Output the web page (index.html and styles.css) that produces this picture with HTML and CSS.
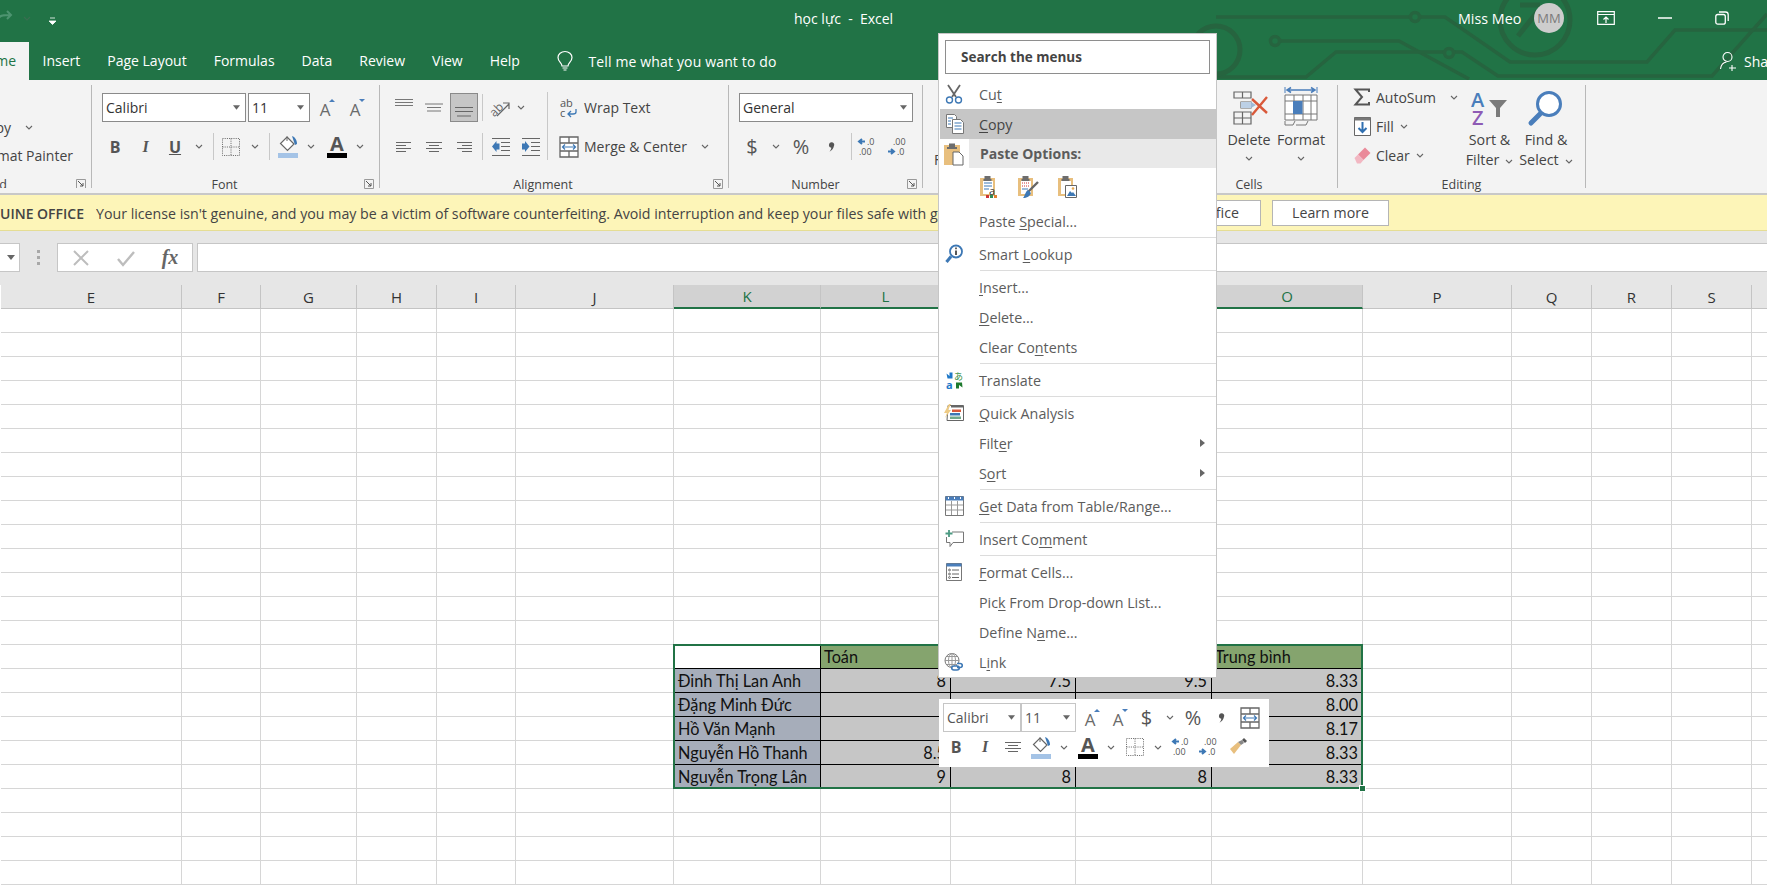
FILE: index.html
```html
<!DOCTYPE html>
<html lang="en">
<head>
<meta charset="utf-8">
<title>học lực - Excel</title>
<link rel="stylesheet" href="styles.css">
</head>
<body>
<svg class="defs" aria-hidden="true">
  <symbol id="chev" viewBox="0 0 8 5"><path d="M1 1l3 3 3-3" fill="none" stroke="#666" stroke-width="1.1"/></symbol>
  <symbol id="caret" viewBox="0 0 8 5"><path d="M0 0h8L4 5z" fill="#666"/></symbol>
  <symbol id="launch" viewBox="0 0 10 10"><path d="M.5.5h9v9h-9z" fill="none" stroke="#999"/><path d="M2 2l5 5M7 4v3H4" fill="none" stroke="#555"/></symbol>
  <symbol id="comma" viewBox="0 0 7 10"><path d="M1 2.800a2.600 2.600 0 1 1 5 1c-.4 2.500-2 4.500-4.500 6 1-1.300 1.700-2.600 1.800-4A2.600 2.600 0 0 1 1 2.800z" fill="#555"/></symbol>
  <symbol id="grow" viewBox="0 0 22 22"><text x="10" y="19" text-anchor="middle" font-family="Open Sans" font-size="17" fill="#6a6a6a">A</text><path d="M14 5l3-3 3 3z" fill="#4a7ebb"/></symbol>
  <symbol id="shrink" viewBox="0 0 22 22"><text x="10" y="19" text-anchor="middle" font-family="Open Sans" font-size="17" fill="#6a6a6a">A</text><path d="M14 2h6l-3 3z" fill="#4a7ebb"/></symbol>
  <symbol id="borders" viewBox="0 0 20 20"><path d="M1.5 1.5h17v17h-17zM10 1.5v17M1.5 10h17" fill="none" stroke="#666" stroke-dasharray="1 1.2"/></symbol>
  <symbol id="fill" viewBox="0 0 20 23"><path d="M9 2l7 7-6.500 6.500-7-7z" fill="#fff" stroke="#666" stroke-width="1.200"/><path d="M9 6V1.500" stroke="#666"/><path d="M14 1c3 1 5 4 5 8l-2 1z" fill="#3d78b5"/><path d="M0 18h20v5H0z" fill="#a4c3e6"/></symbol>
  <symbol id="color" viewBox="0 0 20 23"><text x="10" y="16" text-anchor="middle" font-family="Open Sans" font-weight="700" font-size="20" fill="#555">A</text><path d="M0 18h20v5H0z" fill="#000"/></symbol>
  <symbol id="l-top" viewBox="0 0 20 20"><path d="M1 1.500h18M1 4.500h18M1 7.500h18" stroke="#777" stroke-width="1"/></symbol>
  <symbol id="l-mid" viewBox="0 0 20 20"><path d="M1 6h18M3 9.500h14M3 13h14" stroke="#777" stroke-width="1"/></symbol>
  <symbol id="l-bot" viewBox="0 0 20 20"><path d="M1 9.500h18M1 13.500h18M3 18h14" stroke="#666" stroke-width="1"/></symbol>
  <symbol id="a-left" viewBox="0 0 20 12"><path d="M2 1.500h15M2 4.500h10M2 7.500h15M2 10.500h10" stroke="#666" stroke-width="1.100"/></symbol>
  <symbol id="a-center" viewBox="0 0 20 12"><path d="M2 1.500h16M5 4.500h10M2 7.500h16M5 10.500h10" stroke="#666" stroke-width="1.100"/></symbol>
  <symbol id="a-right" viewBox="0 0 20 12"><path d="M3 1.500h15M8 4.500h10M3 7.500h15M8 10.500h10" stroke="#666" stroke-width="1.100"/></symbol>
  <symbol id="orient" viewBox="0 0 22 22"><text x="0" y="16" transform="rotate(-45 8 12)" font-family="Open Sans" font-size="12" fill="#666">ab</text><path d="M8 19l12-12M14 6h6v6" fill="none" stroke="#666" stroke-width="1.200"/></symbol>
  <symbol id="outdent" viewBox="0 0 20 20"><path d="M1 1.500h18M10 5.500h9M10 9.500h9M10 13.500h9M1 18.500h18" stroke="#666" stroke-width="1.200"/><path d="M8.500 6.500v6h-3v2.500L1 9.500 5.500 4v2.500z" fill="#3d78b5"/></symbol>
  <symbol id="indent" viewBox="0 0 20 20"><path d="M1 1.500h18M10 5.500h9M10 9.500h9M10 13.500h9M1 18.500h18" stroke="#666" stroke-width="1.200"/><path d="M1 6.500v6h3v2.500l4.500-5.500L4 4v2.500z" fill="#3d78b5"/></symbol>
  <symbol id="wrap" viewBox="0 0 20 20"><text x="1" y="9" font-family="Open Sans" font-size="11" fill="#555">ab</text><text x="1" y="19" font-family="Open Sans" font-size="11" fill="#555">c</text><path d="M17 11v3c0 2-2 2-3 2H9M12 13l-3 3 3 3" fill="none" stroke="#3d78b5" stroke-width="1.300"/></symbol>
  <symbol id="merge" viewBox="0 0 20 22"><path d="M1 1h18v20H1zM1 7h18M1 15h18M10 1v6M10 15v6" fill="#fff" stroke="#666" stroke-width="1.300"/><path d="M3.500 11h13M6 8.500L3.500 11 6 13.500M14 8.500l2.500 2.500-2.500 2.500" fill="none" stroke="#3d78b5" stroke-width="1.200"/></symbol>
  <symbol id="incd" viewBox="0 0 26 20"><path d="M9 4.500H4M6 2L3 4.500 6 7" fill="none" stroke="#3d78b5" stroke-width="2"/><text x="11" y="8" font-family="Open Sans" font-size="9" fill="#555">.0</text><text x="3" y="18" font-family="Open Sans" font-size="9" fill="#555">.00</text></symbol>
  <symbol id="decd" viewBox="0 0 26 20"><text x="7" y="8" font-family="Open Sans" font-size="9" fill="#555">.00</text><path d="M2 14.500h5M5 12l3 2.500L5 17" fill="none" stroke="#3d78b5" stroke-width="2"/><text x="11" y="18" font-family="Open Sans" font-size="9" fill="#555">.0</text></symbol>
  <symbol id="clip" viewBox="0 0 22 24"><path d="M1 3h16v20H1z" fill="#e8bf7e"/><path d="M6 1.500h6V5h2v2H4V5h2z" fill="#6d6d6d"/></symbol>
  <symbol id="chk" viewBox="0 0 20 22"><path d="M1 3h15v18H1z" fill="#e8bf7e"/><path d="M4 6h10v13H4z" fill="#fff"/><path d="M5.500 1h6v3h1v2h-8V4h1z" fill="#6d6d6d"/></symbol>
  <symbol id="azsort" viewBox="0 0 38 34"><text x="0" y="16" font-family="Open Sans" font-weight="600" font-size="20" fill="#4a7ebb">A</text><text x="1" y="34" font-family="Open Sans" font-weight="600" font-size="20" fill="#8e5bb5">Z</text><path d="M18 9h18l-7 8v9h-4v-9z" fill="#7a7a7a"/></symbol>
  <symbol id="translate" viewBox="0 0 17 17"><path d="M.5 1.500L3.500 4V.5h3v6h-5z" fill="#1e78c8"/><text x="8" y="8" font-family="Noto Sans CJK JP" font-size="9" fill="#2e8b3a">あ</text><text x="0" y="17" font-family="Open Sans" font-weight="700" font-size="11" fill="#1e78c8">a</text><path d="M16.500 15.500L13 13v3.500h-3v-6h6z" fill="#1e7a2e"/></symbol>
</svg>

<div class="app">
  <div class="chrome">
    <svg class="circuit" width="551" height="80" viewBox="1216 0 551 80" aria-hidden="true">
      <g fill="none" stroke="#26643f" stroke-width="3.500">
        <path d="M1216 17h194M1420 17h25l65 45h137l28-32h92"/>
        <path d="M1280 41h119l70 38"/>
        <path d="M1216 77h90l30-25h108M1454 52h8l36 24h214l55-62"/>
        <circle cx="1415" cy="17" r="4.500"/><circle cx="1275" cy="41" r="4.500"/><circle cx="1449" cy="53" r="4.500"/>
        <circle cx="1535" cy="20" r="35" stroke-width="5"/><circle cx="1216" cy="50" r="24" stroke-width="5"/>
        <path d="M1520 5h20M1518 36l20-25" stroke-width="5"/>
      </g>
    </svg>
    <header class="titlebar">
      <div class="qat">
        <svg class="redo" width="14" height="14" viewBox="0 0 14 14"><path d="M0 8c1-3 5-3 11-3M8 1l4 4-4 4" fill="none" stroke="#4d9470" stroke-width="2"/></svg>
        <svg class="qat-chev" width="8" height="5"><use href="#chev"/></svg>
        <svg class="qat-more" width="7" height="8" viewBox="0 0 7 8"><path d="M1 1h5M0 4h7L3.500 7.500z" fill="#fff" stroke="#fff" stroke-width=".8"/></svg>
      </div>
      <div class="doc-title">học lực&nbsp; -&nbsp; Excel</div>
      <div class="user">Miss Meo</div>
      <div class="avatar">MM</div>
      <svg class="win-ribbon" width="18" height="14" viewBox="0 0 18 14"><path d="M.7.7h16.600v12.600H.7zM.7 3.500h16.600" fill="none" stroke="#fff" stroke-width="1.200"/><path d="M9 12V6M6.500 8.500L9 6l2.500 2.500" fill="none" stroke="#fff" stroke-width="1.200"/></svg>
      <svg class="win-min" width="14" height="2"><path d="M0 1h14" stroke="#fff" stroke-width="1.500"/></svg>
      <svg class="win-restore" width="14" height="14" viewBox="0 0 14 14"><rect x=".8" y="3.500" width="9.500" height="9.700" rx="2" fill="none" stroke="#fff" stroke-width="1.300"/><path d="M4 1h6.500c1.500 0 2.700 1.200 2.700 2.700V10" fill="none" stroke="#fff" stroke-width="1.300"/></svg>
    </header>

    <nav class="tabs">
      <div class="tab tab-home">Home</div>
      <div class="tab">Insert</div>
      <div class="tab">Page Layout</div>
      <div class="tab">Formulas</div>
      <div class="tab">Data</div>
      <div class="tab">Review</div>
      <div class="tab">View</div>
      <div class="tab">Help</div>
      <div class="tell">
        <svg width="16" height="20" viewBox="0 0 16 20"><path d="M5 15c0-3-4-4.500-4-8.500a7 6 0 0 1 14 0c0 4-4 5.500-4 8.500zM5.500 17h5M6.500 19h3" fill="none" stroke="#fff" stroke-width="1.200"/></svg>
        <span>Tell me what you want to do</span>
      </div>
      <div class="share">
        <svg width="18" height="20" viewBox="0 0 18 20"><circle cx="7.500" cy="6" r="4.500" fill="none" stroke="#fff" stroke-width="1.100"/><path d="M.5 18c.5-4 3-6.500 6-7M12 14v6M9 17h7" fill="none" stroke="#fff" stroke-width="1.100"/></svg>
        <span>Share</span>
      </div>
    </nav>
  </div>

  <section class="ribbon">
    <div class="group g-clip">
      <div class="clip-row clip-copy"><span>Copy</span><svg class="clip-chev" width="8" height="5"><use href="#chev"/></svg></div>
      <div class="clip-row clip-paint"><span>Format Painter</span></div>
      <div class="group-label clip-label">Clipboard<svg class="launch" width="10" height="10"><use href="#launch"/></svg></div>
    </div>

    <div class="group g-font">
      <div class="rows">
        <div class="row font-r1">
          <div class="combo w144"><span>Calibri</span><svg width="7" height="5"><use href="#caret"/></svg></div>
          <div class="combo size-combo w62"><span>11</span><svg width="7" height="5"><use href="#caret"/></svg></div>
          <span class="s w31"><svg width="22" height="22"><use href="#grow"/></svg></span>
          <span class="s w30"><svg width="22" height="22"><use href="#shrink"/></svg></span>
        </div>
        <div class="row font-r2">
          <span class="s w30 btn-b">B</span>
          <span class="s w31 btn-i">I</span>
          <span class="s w28 btn-u">U</span>
          <span class="s w20"><svg width="8" height="5"><use href="#chev"/></svg></span>
          <span class="s w9"><i class="vs"></i></span>
          <span class="s w26"><svg width="20" height="20"><use href="#borders"/></svg></span>
          <span class="s w22"><svg width="8" height="5"><use href="#chev"/></svg></span>
          <span class="s w6"><i class="vs"></i></span>
          <span class="s w32"><svg width="20" height="23"><use href="#fill"/></svg></span>
          <span class="s w14"><svg width="8" height="5"><use href="#chev"/></svg></span>
          <span class="s w38"><svg width="20" height="23"><use href="#color"/></svg></span>
          <span class="s w8"><svg width="8" height="5"><use href="#chev"/></svg></span>
        </div>
      </div>
      <div class="group-label">Font<svg class="launch" width="10" height="10"><use href="#launch"/></svg></div>
    </div>

    <div class="group g-align">
      <div class="align-body">
        <div class="rows align-left">
          <div class="row align-r">
            <span class="s w30"><svg width="20" height="20"><use href="#l-top"/></svg></span>
            <span class="s w30"><svg width="20" height="20"><use href="#l-mid"/></svg></span>
            <span class="s w30"><span class="active-btn"><svg width="20" height="20"><use href="#l-bot"/></svg></span></span>
            <span class="s w7"><i class="vs"></i></span>
            <span class="s w28"><svg width="22" height="22"><use href="#orient"/></svg></span>
            <span class="s w14"><svg width="8" height="5"><use href="#chev"/></svg></span>
          </div>
          <div class="row align-r row2">
            <span class="s w30"><svg width="20" height="12"><use href="#a-left"/></svg></span>
            <span class="s w30"><svg width="20" height="12"><use href="#a-center"/></svg></span>
            <span class="s w30"><svg width="20" height="12"><use href="#a-right"/></svg></span>
            <span class="s w7"><i class="vs"></i></span>
            <span class="s w30"><svg width="20" height="20"><use href="#outdent"/></svg></span>
            <span class="s w30"><svg width="20" height="20"><use href="#indent"/></svg></span>
          </div>
        </div>
        <i class="vs-tall"></i>
        <div class="rows align-right">
          <div class="row"><span class="s w31"><svg width="20" height="20"><use href="#wrap"/></svg></span><span>Wrap Text</span></div>
          <div class="row row2"><span class="s w31"><svg width="20" height="22"><use href="#merge"/></svg></span><span>Merge &amp; Center</span><svg class="merge-chev" width="8" height="5"><use href="#chev"/></svg></div>
        </div>
      </div>
      <div class="group-label">Alignment<svg class="launch" width="10" height="10"><use href="#launch"/></svg></div>
    </div>

    <div class="group g-number">
      <div class="rows">
        <div class="row num-r1"><div class="combo w174"><span>General</span><svg width="7" height="5"><use href="#caret"/></svg></div></div>
        <div class="row num-r2">
          <span class="s w24 glyph-l">$</span>
          <span class="s w24"><svg width="8" height="5"><use href="#chev"/></svg></span>
          <span class="s w26 glyph-l">%</span>
          <span class="s w35"><svg width="7" height="10"><use href="#comma"/></svg></span>
          <span class="s w4"><i class="vs"></i></span>
          <span class="s w32"><svg width="26" height="20"><use href="#incd"/></svg></span>
          <span class="s w28"><svg width="26" height="20"><use href="#decd"/></svg></span>
        </div>
      </div>
      <div class="group-label">Number<svg class="launch" width="10" height="10"><use href="#launch"/></svg></div>
    </div>

    <div class="group g-styles"><div class="styles-stub">Format as</div></div>

    <div class="group g-cells">
      <div class="bigs">
        <div class="big w52">
          <div class="big-icon del-icon"><svg width="36" height="34" viewBox="0 0 36 34"><path d="M1 1h17v6H1zM9.500 1v6M8 11h10v6H8zM1 21h17v12H1zM1 27h17M9.500 21v12" fill="none" stroke="#666" stroke-width="1.200"/><path d="M8 11h10v6H8z" fill="#bcd0e6"/><path d="M18 11l5 3-5 3z" fill="#9db9d8"/><path d="M19 8l15 14M34 6L19 24" stroke="#d9593a" stroke-width="2.400" fill="none"/></svg></div>
          <span>Delete</span>
          <svg class="big-chev" width="8" height="5"><use href="#chev"/></svg>
        </div>
        <div class="big w52">
          <div class="big-icon"><svg width="34" height="42" viewBox="0 0 34 42"><path d="M1 0v6M33 0v6" stroke="#4a7ebb"/><path d="M3 3h28M7 .5L3 3l4 2.500M27 .5L31 3l-4 2.500" fill="none" stroke="#4a7ebb" stroke-width="1.500"/><path d="M1 8h32v25H1zM1 14h32M1 27h32M10 8v25M19 8v25M27 8v25" fill="#fff" stroke="#777" stroke-width="1"/><path d="M9 14h9.500v13H9z" fill="#4a7ebb"/><path d="M1 34v4h8l2-4M12 38h10l2-4" fill="none" stroke="#777"/></svg></div>
          <span>Format</span>
          <svg class="big-chev" width="8" height="5"><use href="#chev"/></svg>
        </div>
      </div>
      <div class="group-label">Cells</div>
    </div>

    <div class="group g-edit">
      <div class="edit-body">
        <div class="edit-col">
          <div class="edit-row"><span class="s w24"><svg width="16" height="18" viewBox="0 0 16 18"><path d="M15 4V1.500H1.500L8 9l-6.500 7.500H15V14" fill="none" stroke="#555" stroke-width="2"/></svg></span><span>AutoSum</span><svg class="autosum-chev" width="8" height="5"><use href="#chev"/></svg></div>
          <div class="edit-row"><span class="s w24"><svg width="17" height="19" viewBox="0 0 17 19"><path d="M.5.500h16v18H.5z" fill="#fff" stroke="#666"/><path d="M.5.500h16v3H.5z" fill="#777"/><path d="M8.500 5v10M4.500 11l4 4 4-4" fill="none" stroke="#2f6fb0" stroke-width="2"/></svg></span><span>Fill</span><svg class="fill-chev" width="8" height="5"><use href="#chev"/></svg></div>
          <div class="edit-row"><span class="s w24"><svg width="17" height="17" viewBox="0 0 17 17"><path d="M11 .5l5.500 5.500-7 7L4 7.500z" fill="#ea8a9a"/><path d="M4 7.500l5.500 5.500-3 3.500H3L.5 11z" fill="#f2b7c2"/></svg></span><span>Clear</span><svg class="fill-chev" width="8" height="5"><use href="#chev"/></svg></div>
        </div>
        <div class="big w57">
          <div class="big-icon"><svg width="38" height="34" viewBox="0 0 38 34"><use href="#azsort"/></svg></div>
          <span>Sort &amp;</span>
          <span>Filter<svg class="inl-chev" width="8" height="5"><use href="#chev"/></svg></span>
        </div>
        <div class="big w56">
          <div class="big-icon"><svg width="36" height="36" viewBox="0 0 36 36"><circle cx="21" cy="14" r="11.500" fill="#fff" stroke="#4a7ebb" stroke-width="3"/><path d="M12 24L3 33" stroke="#4a7ebb" stroke-width="5" stroke-linecap="round"/></svg></div>
          <span>Find &amp;</span>
          <span>Select<svg class="inl-chev" width="8" height="5"><use href="#chev"/></svg></span>
        </div>
      </div>
      <div class="group-label">Editing</div>
    </div>
  </section>

  <section class="notice">
    <div class="notice-title"><b>GENUINE OFFICE</b></div>
    <div class="notice-text">Your license isn't genuine, and you may be a victim of software counterfeiting. Avoid interruption and keep your files safe with genuine Office.</div>
    <div class="notice-btn nb-get">Get genuine Office</div>
    <div class="notice-btn nb-learn">Learn more</div>
  </section>

  <section class="formula">
    <div class="namebox"><svg width="8" height="5"><use href="#caret"/></svg></div>
    <div class="dots"><i></i><i></i><i></i></div>
    <div class="fx-box">
      <span class="s w46"><svg width="16" height="16" viewBox="0 0 16 16"><path d="M1 1l14 14M15 1L1 15" stroke="#bdbdbd" stroke-width="2"/></svg></span>
      <span class="s w44"><svg width="18" height="16" viewBox="0 0 18 16"><path d="M1 9l5 6L17 2" fill="none" stroke="#bdbdbd" stroke-width="2.400"/></svg></span>
      <span class="s w44 fx">fx</span>
    </div>
    <div class="fx-input"></div>
  </section>

  <section class="sheet">
    <table class="grid">
      <colgroup>
        <col class="c-e"><col class="c-f"><col class="c-g"><col class="c-h"><col class="c-i"><col class="c-j"><col class="c-k"><col class="c-l"><col class="c-m"><col class="c-n"><col class="c-o"><col class="c-p"><col class="c-q"><col class="c-r"><col class="c-s"><col class="c-t">
      </colgroup>
      <thead>
        <tr><th>E</th><th>F</th><th>G</th><th>H</th><th>I</th><th>J</th><th class="sel">K</th><th class="sel">L</th><th class="sel">M</th><th class="sel">N</th><th class="sel">O</th><th>P</th><th>Q</th><th>R</th><th>S</th><th>T</th></tr>
      </thead>
      <tbody>
        <tr><td></td><td></td><td></td><td></td><td></td><td></td><td></td><td></td><td></td><td></td><td></td><td></td><td></td><td></td><td></td><td></td></tr>
        <tr><td></td><td></td><td></td><td></td><td></td><td></td><td></td><td></td><td></td><td></td><td></td><td></td><td></td><td></td><td></td><td></td></tr>
        <tr><td></td><td></td><td></td><td></td><td></td><td></td><td></td><td></td><td></td><td></td><td></td><td></td><td></td><td></td><td></td><td></td></tr>
        <tr><td></td><td></td><td></td><td></td><td></td><td></td><td></td><td></td><td></td><td></td><td></td><td></td><td></td><td></td><td></td><td></td></tr>
        <tr><td></td><td></td><td></td><td></td><td></td><td></td><td></td><td></td><td></td><td></td><td></td><td></td><td></td><td></td><td></td><td></td></tr>
        <tr><td></td><td></td><td></td><td></td><td></td><td></td><td></td><td></td><td></td><td></td><td></td><td></td><td></td><td></td><td></td><td></td></tr>
        <tr><td></td><td></td><td></td><td></td><td></td><td></td><td></td><td></td><td></td><td></td><td></td><td></td><td></td><td></td><td></td><td></td></tr>
        <tr><td></td><td></td><td></td><td></td><td></td><td></td><td></td><td></td><td></td><td></td><td></td><td></td><td></td><td></td><td></td><td></td></tr>
        <tr><td></td><td></td><td></td><td></td><td></td><td></td><td></td><td></td><td></td><td></td><td></td><td></td><td></td><td></td><td></td><td></td></tr>
        <tr><td></td><td></td><td></td><td></td><td></td><td></td><td></td><td></td><td></td><td></td><td></td><td></td><td></td><td></td><td></td><td></td></tr>
        <tr><td></td><td></td><td></td><td></td><td></td><td></td><td></td><td></td><td></td><td></td><td></td><td></td><td></td><td></td><td></td><td></td></tr>
        <tr><td></td><td></td><td></td><td></td><td></td><td></td><td></td><td></td><td></td><td></td><td></td><td></td><td></td><td></td><td></td><td></td></tr>
        <tr><td></td><td></td><td></td><td></td><td></td><td></td><td></td><td></td><td></td><td></td><td></td><td></td><td></td><td></td><td></td><td></td></tr>
        <tr><td></td><td></td><td></td><td></td><td></td><td></td><td></td><td></td><td></td><td></td><td></td><td></td><td></td><td></td><td></td><td></td></tr>
        <tr><td></td><td></td><td></td><td></td><td></td><td></td><td class="blank"></td><td class="hd">Toán</td><td class="hd">Văn</td><td class="hd">Anh</td><td class="hd">Trung bình</td><td></td><td></td><td></td><td></td><td></td></tr>
        <tr><td></td><td></td><td></td><td></td><td></td><td></td><td class="nm">Đinh Thị Lan Anh</td><td class="v">8</td><td class="v">7.5</td><td class="v">9.5</td><td class="v">8.33</td><td></td><td></td><td></td><td></td><td></td></tr>
        <tr><td></td><td></td><td></td><td></td><td></td><td></td><td class="nm">Đặng Minh Đức</td><td class="v"></td><td class="v"></td><td class="v"></td><td class="v">8.00</td><td></td><td></td><td></td><td></td><td></td></tr>
        <tr><td></td><td></td><td></td><td></td><td></td><td></td><td class="nm">Hồ Văn Mạnh</td><td class="v"></td><td class="v"></td><td class="v"></td><td class="v">8.17</td><td></td><td></td><td></td><td></td><td></td></tr>
        <tr><td></td><td></td><td></td><td></td><td></td><td></td><td class="nm">Nguyễn Hồ Thanh</td><td class="v">8.5</td><td class="v"></td><td class="v"></td><td class="v">8.33</td><td></td><td></td><td></td><td></td><td></td></tr>
        <tr><td></td><td></td><td></td><td></td><td></td><td></td><td class="nm last">Nguyễn Trọng Lân</td><td class="v last">9</td><td class="v last">8</td><td class="v last">8</td><td class="v last">8.33</td><td></td><td></td><td></td><td></td><td></td></tr>
        <tr><td></td><td></td><td></td><td></td><td></td><td></td><td></td><td></td><td></td><td></td><td></td><td></td><td></td><td></td><td></td><td></td></tr>
        <tr><td></td><td></td><td></td><td></td><td></td><td></td><td></td><td></td><td></td><td></td><td></td><td></td><td></td><td></td><td></td><td></td></tr>
        <tr><td></td><td></td><td></td><td></td><td></td><td></td><td></td><td></td><td></td><td></td><td></td><td></td><td></td><td></td><td></td><td></td></tr>
        <tr><td></td><td></td><td></td><td></td><td></td><td></td><td></td><td></td><td></td><td></td><td></td><td></td><td></td><td></td><td></td><td></td></tr>
        <tr><td></td><td></td><td></td><td></td><td></td><td></td><td></td><td></td><td></td><td></td><td></td><td></td><td></td><td></td><td></td><td></td></tr>
      </tbody>
    </table>
    <div class="selection"><i class="handle"></i></div>
  </section>

  <!-- context menu -->
  <div class="menu">
    <div class="menu-search">Search the menus</div>
    <div class="mi"><span class="mi-ic"><svg width="18" height="20" viewBox="0 0 18 20"><path d="M3 1l8 12M15 1L7 13" stroke="#666" stroke-width="1.800"/><circle cx="4.500" cy="16" r="3" fill="none" stroke="#3d78b5" stroke-width="1.400"/><circle cx="13.500" cy="16" r="3" fill="none" stroke="#3d78b5" stroke-width="1.400"/></svg></span><span>Cu<u>t</u></span></div>
    <div class="mi mi-hot"><span class="mi-ic"><svg width="18" height="20" viewBox="0 0 18 20"><path d="M.5.500h8l2 2v11H.5z" fill="#fff" stroke="#777"/><path d="M6.500 5.500h8l3 3v11h-11z" fill="#fff" stroke="#777"/><path d="M2 4h5M2 7h3M2 10h3M8.500 9h7M8.500 12h7M8.500 15h7" stroke="#3d78b5"/></svg></span><span><u>C</u>opy</span></div>
    <div class="mi mi-paste"><span class="mi-ic"><svg width="22" height="24" viewBox="0 0 22 24"><use href="#clip" width="22" height="24"/><path d="M10 10h6l4 4v9H10z" fill="#fff" stroke="#666"/></svg></span><span class="paste-label">Paste Options:</span></div>
    <div class="paste-icons">
      <span class="s w39"><svg width="20" height="24" viewBox="0 0 20 24"><use href="#chk" width="20" height="22"/><path d="M5 8h8M5 11h8M5 14h5" stroke="#3d78b5"/><text x="10" y="20" font-family="Open Sans" font-size="11" fill="#333">a</text><path d="M7 20h3v3H7z" fill="#c33"/><path d="M11 20h3v3h-3z" fill="#2e8b57"/><path d="M15 20h3v3h-3z" fill="#e08030"/></svg></span>
      <span class="s w39"><svg width="22" height="24" viewBox="0 0 22 24"><use href="#chk" width="20" height="22"/><path d="M5 8h8M5 11h8" stroke="#c33" stroke-dasharray="1 1"/><path d="M5 14h6" stroke="#3d78b5"/><path d="M21 7L11 17" stroke="#666" stroke-width="2.400"/><path d="M11 15l3 3c-1 3-4 5-8 5 2-2 2-6 5-8z" fill="#3d78b5"/></svg></span>
      <span class="s w39"><svg width="20" height="24" viewBox="0 0 20 24"><use href="#chk" width="20" height="22"/><path d="M8.500 10.500h11v12h-11z" fill="#fff" stroke="#666"/><path d="M10 21l3-5 2 2 1-1 3 4z" fill="#3d78b5"/><circle cx="16" cy="13.500" r="1.300" fill="#e8a850"/></svg></span>
    </div>
    <div class="mi"><span class="mi-ic"></span><span>Paste <u>S</u>pecial...</span></div>
    <div class="msep"></div>
    <div class="mi"><span class="mi-ic"><svg width="18" height="20" viewBox="0 0 18 20"><circle cx="11" cy="7.500" r="6" fill="#fff" stroke="#3d78b5" stroke-width="1.800"/><path d="M6 12.500L1.500 18" stroke="#3d78b5" stroke-width="3"/><path d="M11 6.500v4.500" stroke="#555" stroke-width="2"/><path d="M11 3.500v1.800" stroke="#555" stroke-width="1.800"/></svg></span><span>Smart <u>L</u>ookup</span></div>
    <div class="msep"></div>
    <div class="mi"><span class="mi-ic"></span><span><u>I</u>nsert...</span></div>
    <div class="mi"><span class="mi-ic"></span><span><u>D</u>elete...</span></div>
    <div class="mi"><span class="mi-ic"></span><span>Clear Co<u>n</u>tents</span></div>
    <div class="msep"></div>
    <div class="mi"><span class="mi-ic"><svg width="17" height="17" viewBox="0 0 17 17"><use href="#translate"/></svg></span><span>Translate</span></div>
    <div class="msep"></div>
    <div class="mi"><span class="mi-ic"><svg width="20" height="18" viewBox="0 0 20 18"><path d="M4 1.500h15.500v15H3z" fill="#fff" stroke="#666"/><path d="M7 1h12v2.500H7z" fill="#666"/><path d="M8 5.500h9v2.500H8z" fill="#d9593a"/><path d="M6 9h10v2.500H6z" fill="#3d78b5"/><path d="M6 12.500h11v2.500H6z" fill="#6fa88a"/><path d="M5 0L0 9h3l-2 5 6-8H4l3-6z" fill="#eecb85"/></svg></span><span><u>Q</u>uick Analysis</span></div>
    <div class="mi mi-sub"><span class="mi-ic"></span><span>Filt<u>e</u>r</span><i class="arrow"></i></div>
    <div class="mi mi-sub"><span class="mi-ic"></span><span>S<u>o</u>rt</span><i class="arrow"></i></div>
    <div class="msep"></div>
    <div class="mi"><span class="mi-ic"><svg width="19" height="20" viewBox="0 0 19 20"><path d="M.5.500h18v19H.5z" fill="#fff" stroke="#777"/><path d="M.5.500h18v4H.5z" fill="#4a7ebb"/><path d="M6.500 5v14M12.500 5v14M1 9h17M1 14h17" stroke="#999"/><path d="M3 2h1M9 2h1M15 2h1" stroke="#fff" stroke-width="2"/></svg></span><span><u>G</u>et Data from Table/Range...</span></div>
    <div class="msep"></div>
    <div class="mi"><span class="mi-ic"><svg width="19" height="18" viewBox="0 0 19 18"><path d="M7 2h11.500v10.500H8l-3 4V12.500H1.500V7" fill="#fff" stroke="#777"/><path d="M4 0v7M.5 3.500h7" stroke="#4c9a82" stroke-width="1.800"/></svg></span><span>Insert Co<u>m</u>ment</span></div>
    <div class="msep"></div>
    <div class="mi"><span class="mi-ic"><svg width="16" height="18" viewBox="0 0 16 18"><path d="M.5.500h15v17H.5z" fill="#fff" stroke="#777"/><path d="M.5.500h15v3H.5z" fill="#4a7ebb"/><path d="M6 7h7M6 11h7M6 14.500h7" stroke="#666"/><circle cx="3.500" cy="7" r=".9" fill="none" stroke="#666"/><circle cx="3.500" cy="11" r=".9" fill="none" stroke="#666"/><circle cx="3.500" cy="14.500" r=".9" fill="none" stroke="#666"/></svg></span><span><u>F</u>ormat Cells...</span></div>
    <div class="mi"><span class="mi-ic"></span><span>Pic<u>k</u> From Drop-down List...</span></div>
    <div class="mi"><span class="mi-ic"></span><span>Define N<u>a</u>me...</span></div>
    <div class="mi"><span class="mi-ic"><svg width="20" height="18" viewBox="0 0 20 18"><circle cx="8" cy="7.500" r="7" fill="#fff" stroke="#777"/><path d="M1 7.500h14M8 .5v14M3 3.500h10M3 11.500h10" stroke="#999"/><ellipse cx="8" cy="7.500" rx="3.500" ry="7" fill="none" stroke="#999"/><path d="M10 13c-3 0-3 4 0 4h3c3 0 3-4 0-4zM13 10.500h3c3 0 3 4 0 4h-3" fill="#fff" stroke="#3d78b5" stroke-width="1.600"/></svg></span><span>L<u>i</u>nk</span></div>
  </div>

  <!-- mini toolbar -->
  <div class="mini">
    <div class="mini-r1">
      <div class="mini-combo w78"><span>Calibri</span><svg width="7" height="5"><use href="#caret"/></svg></div>
      <div class="mini-combo w55"><span>11</span><svg width="7" height="5"><use href="#caret"/></svg></div>
      <span class="s w30"><svg width="22" height="22"><use href="#grow"/></svg></span>
      <span class="s w26"><svg width="22" height="22"><use href="#shrink"/></svg></span>
      <span class="s w29 glyph-l">$</span>
      <span class="s w18"><svg width="8" height="5"><use href="#chev"/></svg></span>
      <span class="s w28 glyph-l">%</span>
      <span class="s w28"><svg width="7" height="10"><use href="#comma"/></svg></span>
      <span class="s w29"><svg width="20" height="22"><use href="#merge"/></svg></span>
    </div>
    <div class="mini-r2">
      <span class="s w26 btn-b">B</span>
      <span class="s w32 btn-i">I</span>
      <span class="s w24"><svg width="20" height="12"><use href="#a-center"/></svg></span>
      <span class="s w32"><svg width="20" height="23"><use href="#fill"/></svg></span>
      <span class="s w14"><svg width="8" height="5"><use href="#chev"/></svg></span>
      <span class="s w34"><svg width="20" height="23"><use href="#color"/></svg></span>
      <span class="s w12"><svg width="8" height="5"><use href="#chev"/></svg></span>
      <span class="s w36"><svg width="20" height="20"><use href="#borders"/></svg></span>
      <span class="s w10"><svg width="8" height="5"><use href="#chev"/></svg></span>
      <span class="s w29 mini-gap"><svg width="26" height="20"><use href="#incd"/></svg></span>
      <span class="s w25"><svg width="26" height="20"><use href="#decd"/></svg></span>
      <span class="s w33"><svg width="20" height="20" viewBox="0 0 20 20"><path d="M12 8l-3-3-8 7 4 5z" fill="#e8bf7e"/><path d="M9 5l3 3 3-2-2-3z" fill="#888"/><path d="M13 3l2-2 3 3-2 2z" fill="#555"/></svg></span>
    </div>
  </div>
</div>
</body>
</html>
```

FILE: styles.css
```css
* { box-sizing: border-box; }
html, body { margin: 0; padding: 0; width: 100%; height: 100%; overflow: hidden; background: #fff; }
body { font-family: "Open Sans", "Noto Sans", sans-serif; font-size: 14px; color: #444; }
.defs { display: none; }
svg { display: block; flex: none; overflow: visible; }
.app { position: relative; width: 1767px; height: 885px; overflow: hidden; display: flex; flex-direction: column; }

/* slots */
.s { display: flex; align-items: center; justify-content: center; flex: none; }
.w4 { width: 4px; } .w6 { width: 6px; } .w7 { width: 7px; } .w8 { width: 8px; } .w9 { width: 9px; } .w10 { width: 10px; }
.w12 { width: 12px; } .w14 { width: 14px; } .w18 { width: 18px; } .w20 { width: 20px; } .w22 { width: 22px; } .w24 { width: 24px; }
.w25 { width: 25px; } .w26 { width: 26px; } .w28 { width: 28px; } .w29 { width: 29px; } .w30 { width: 30px; } .w31 { width: 31px; }
.w32 { width: 32px; } .w33 { width: 33px; } .w34 { width: 34px; } .w35 { width: 35px; } .w36 { width: 36px; } .w38 { width: 38px; }
.w39 { width: 39px; } .w44 { width: 44px; } .w46 { width: 46px; } .w52 { width: 52px; } .w55 { width: 55px; } .w56 { width: 56px; } .w57 { width: 57px; } .w62 { width: 62px; }
.w78 { width: 78px; } .w144 { width: 144px; } .w174 { width: 174px; }
.vs { display: block; width: 1px; height: 27px; background: #c8c8c8; }

/* title bar */
.chrome { position: relative; height: 80px; flex: none; background: #217346; color: #fff; overflow: hidden; }
.circuit { position: absolute; right: 0; top: 0; }
.titlebar { position: relative; height: 42px; display: flex; align-items: center; }
.qat { position: relative; width: 794px; height: 42px; flex: none; }
.redo { position: absolute; left: -1px; top: 10px; }
.qat-chev { position: absolute; left: 23px; top: 16px; opacity: .35; }
.qat-more { position: absolute; left: 49px; top: 17px; }
.doc-title { width: 664px; flex: none; font-size: 14px; margin-top: -6px; }
.user { width: 76px; flex: none; font-size: 14.300px; margin-top: -6px; }
.avatar { width: 30px; height: 30px; border-radius: 50%; background: #cdcdcd; color: #7b7b7b; font-size: 13px; display: flex; align-items: center; justify-content: center; flex: none; margin-top: -6px; }
.win-ribbon { margin-left: 33px; margin-top: -6px; }
.win-min { margin-left: 43px; margin-top: -6px; }
.win-restore { margin-left: 43px; margin-top: -6px; }

/* tabs */
.tabs { position: relative; height: 38px; display: flex; align-items: center; font-size: 14px; }
.tab { padding: 0 13.500px; height: 38px; line-height: 38px; white-space: nowrap; }
.tab-home { width: 29px; padding: 0 13px 0 0; background: #f3f3f3; color: #217346; display: flex; justify-content: flex-end; }
.tell { display: flex; align-items: center; margin-left: 24px; gap: 15px; letter-spacing: .15px; white-space: nowrap; }
.share { display: flex; align-items: center; margin-left: auto; margin-right: -20px; gap: 6px; width: 67px; }

/* ribbon */
.ribbon { height: 115px; flex: none; display: flex; background: #f3f3f3; border-bottom: 2px solid #c8c8c8; padding-top: 5px; }
.group { position: relative; height: 103px; border-right: 1px solid #b8b8b8; display: flex; flex-direction: column; flex: none; color: #444; }
.group-label { position: absolute; left: 0; right: 0; top: 91px; height: 18px; line-height: 18px; text-align: center; font-size: 12.500px; color: #444; }
.launch { position: absolute; right: 5px; top: 3px; }
.rows { padding-top: 8px; display: flex; flex-direction: column; }
.row { display: flex; align-items: center; height: 29px; }
.row2 { margin-top: 11px; height: 27px; }
.g-clip { width: 92px; overflow: hidden; }
.clip-row { display: flex; justify-content: flex-end; align-items: center; white-space: nowrap; position: absolute; height: 20px; }
.clip-copy { top: 32px; right: 80px; }
.clip-copy .clip-chev { position: absolute; right: -22px; top: 8px; }
.clip-paint { top: 60px; right: 18px; }
.clip-label { left: auto; right: 84px; width: 60px; text-align: right; }
.clip-label .launch { right: -79px; }
.g-font { width: 288px; }
.g-font .group-label { padding-right: 22px; }
.font-r1 { margin-left: 10px; }
.font-r2 { margin-left: 8px; margin-top: 11px; height: 27px; }
.combo { display: flex; align-items: center; justify-content: space-between; height: 29px; background: #fff; border: 1px solid #8a8a8a; padding: 0 5px 0 3px; font-size: 14px; color: #333; flex: none; }
.size-combo { margin-left: 2px; }
.btn-b { font-weight: 700; font-size: 16px; color: #555; }
.btn-i { font-style: italic; font-weight: 700; font-size: 16px; color: #555; font-family: "Liberation Serif", serif; }
.btn-u { text-decoration: underline; font-weight: 700; font-size: 16px; color: #555; }
.g-align { width: 349px; }
.g-align .group-label { padding-right: 22px; }
.align-body { display: flex; }
.align-left { width: 167px; padding-left: 9px; }
.vs-tall { display: block; width: 1px; height: 68px; margin-top: 7px; background: #c8c8c8; margin-right: 5px; flex: none; }
.align-right { white-space: nowrap; }
.active-btn { display: flex; width: 28px; height: 29px; align-items: center; justify-content: center; background: #c6c6c6; border: 1px solid #8a8a8a; }
.merge-chev { margin-left: 14px; }
.g-number { width: 194px; }
.g-number .group-label { padding-right: 20px; }
.num-r1 { margin-left: 10px; }
.num-r2 { margin-left: 11px; margin-top: 11px; height: 27px; }
.glyph-l { font-size: 20px; color: #555; }
.g-styles { width: 288px; border-right: 0; }
.styles-stub { margin: 65px 0 0 11px; white-space: nowrap; }
.g-cells { width: 127px; }
.g-cells .group-label { padding-right: 50px; padding-left: 0; }
.bigs { display: flex; margin-left: 12px; }
.big { display: flex; flex-direction: column; align-items: center; white-space: nowrap; line-height: 20px; flex: none; font-size: 14.300px; }
.big-icon { height: 45px; display: flex; align-items: center; justify-content: center; }
.del-icon { padding-left: 4px; }
.big-chev { margin-top: 6px; }
.inl-chev { display: inline-block; margin-left: 6px; vertical-align: middle; }
.g-edit { width: 248px; }
.edit-body { display: flex; }
.edit-col { width: 112px; margin-left: 12px; margin-right: -1px; display: flex; flex-direction: column; gap: 5px; white-space: nowrap; }
.edit-row { display: flex; align-items: center; height: 24px; }
.edit-row > span:nth-child(2) { margin-left: 2px; }
.autosum-chev { margin-left: 14px; }
.fill-chev { margin-left: 6px; }

/* notice */
.notice { height: 36px; flex: none; display: flex; align-items: center; background: #fdf5b8; border-bottom: 1px solid #e5dd94; white-space: nowrap; color: #444; padding-top: 1px; font-size: 14.200px; }
.notice-title { width: 84px; display: flex; justify-content: flex-end; flex: none; font-size: 14px; }
.notice-title b { font-weight: 600; }
.notice-text { width: 965px; margin-left: 12px; overflow: hidden; flex: none; }
.notice-btn { height: 26px; line-height: 24px; border: 1px solid #b5b5b5; background: #fff; text-align: center; flex: none; }
.nb-get { width: 200px; padding-right: 21px; text-align: right; }
.nb-learn { width: 117px; margin-left: 11px; }

/* formula bar */
.formula { height: 54px; flex: none; background: #e6e6e6; display: flex; align-items: center; padding-bottom: 1px; }
.namebox { width: 20px; height: 29px; background: #fff; border: 1px solid #c6c6c6; border-left: 0; display: flex; align-items: center; justify-content: flex-end; padding-right: 4px; }
.dots { width: 37px; display: flex; flex-direction: column; align-items: center; gap: 3px; }
.dots i { width: 3px; height: 3px; background: #a8a8a8; display: block; }
.fx-box { width: 136px; height: 29px; background: #fff; border: 1px solid #c6c6c6; display: flex; align-items: center; }
.fx { font-family: "Liberation Serif", serif; font-style: italic; font-weight: 700; font-size: 20px; color: #666; }
.fx-input { flex: 1; margin-left: 4px; height: 29px; background: #fff; border: 1px solid #c6c6c6; border-right: 0; }

/* sheet */
.sheet { position: relative; flex: 1; overflow: hidden; background: #fff; }
.grid { border-collapse: separate; border-spacing: 0; table-layout: fixed; width: 1851px; margin-left: 1px; font-family: Lato, "Noto Sans", sans-serif; font-size: 16.300px; color: #111; }
.c-e { width: 181px; } .c-f { width: 79px; } .c-g { width: 96px; } .c-h { width: 80px; } .c-i { width: 79px; } .c-j { width: 158px; }
.c-k { width: 147px; } .c-l { width: 130px; } .c-m { width: 125px; } .c-n { width: 136px; } .c-o { width: 151px; } .c-p { width: 149px; }
.c-q { width: 80px; } .c-r { width: 80px; } .c-s { width: 80px; } .c-t { width: 100px; }
.grid th { height: 24px; background: #e6e6e6; border-right: 1px solid #c4c4c4; border-bottom: 1px solid #c4c4c4; font: 400 15px "Open Sans", sans-serif; color: #333; padding: 0; }
.grid th.sel { background: #d2d2d2; color: #217346; border-bottom: 2px solid #217346; }
.grid td { height: 24px; padding: 0 4px; border-right: 1px solid #d6d6d6; border-bottom: 1px solid #d6d6d6; white-space: nowrap; overflow: hidden; line-height: 22px; }
.grid td.blank { background: #fff; border-right-color: #000; border-bottom-color: #000; }
.grid td.hd { background: #85a46e; padding-left: 3px; border-right-color: #85a46e; border-bottom-color: #000; }
.grid td.nm { background: #a6adba; border-right-color: #000; border-bottom-color: #000; }
.grid td.v { background: #c6c6c6; text-align: right; border-right-color: #000; border-bottom-color: #000; }
.grid td.last { border-bottom-color: #fff; }
.selection { position: absolute; left: 673px; top: 359px; width: 690px; height: 145px; border: 2px solid #217346; }
.handle { position: absolute; right: -5px; bottom: -5px; width: 7px; height: 7px; background: #217346; border: 1px solid #fff; }

/* context menu */
.menu { position: absolute; left: 938px; top: 33px; width: 279px; height: 645px; background: #fff; border: 1px solid #c6c6c6; padding-top: 45px; color: #5c5c5c; font-size: 14.300px; }
.menu u { text-underline-offset: 2px; }
.menu-search { position: absolute; left: 6px; top: 6px; width: 265px; height: 34px; border: 1px solid #8e8e8e; padding-left: 15px; line-height: 32px; font-weight: 700; color: #444; font-size: 13.500px; }
.mi { height: 30px; display: flex; align-items: center; position: relative; white-space: nowrap; }
.mi-ic { width: 29px; height: 30px; padding-left: 1px; margin-right: 11px; display: flex; align-items: center; justify-content: center; flex: none; }
.mi-hot { background: #c6c6c6; margin-left: 1px; color: #444; }
.mi-hot .mi-ic { width: 28px; }
.mi-paste { height: 29px; }
.paste-label { flex: 1; height: 29px; line-height: 29px; background: #e9e9e9; margin-left: -10px; padding-left: 11px; font-weight: 700; font-size: 14px; }
.paste-icons { height: 38px; display: flex; align-items: center; padding: 0 0 0 30px; }
.msep { height: 1px; margin: 1px 0 1px 41px; background: #dcdcdc; }
.arrow { position: absolute; right: 11px; top: 11px; border-left: 5px solid #666; border-top: 4.500px solid transparent; border-bottom: 4.500px solid transparent; }

/* mini toolbar */
.mini { position: absolute; left: 939px; top: 699px; width: 330px; height: 68px; background: #fff; padding: 4px 0 0 4px; }
.mini-r1 { display: flex; height: 29px; align-items: center; }
.mini-r2 { display: flex; height: 30px; align-items: center; }
.mini-combo { display: flex; align-items: center; justify-content: space-between; height: 29px; border: 1px solid #c6c6c6; padding: 0 5px 0 3px; font-size: 14px; color: #555; flex: none; }
.mini-gap { margin-left: 5px; }
```
